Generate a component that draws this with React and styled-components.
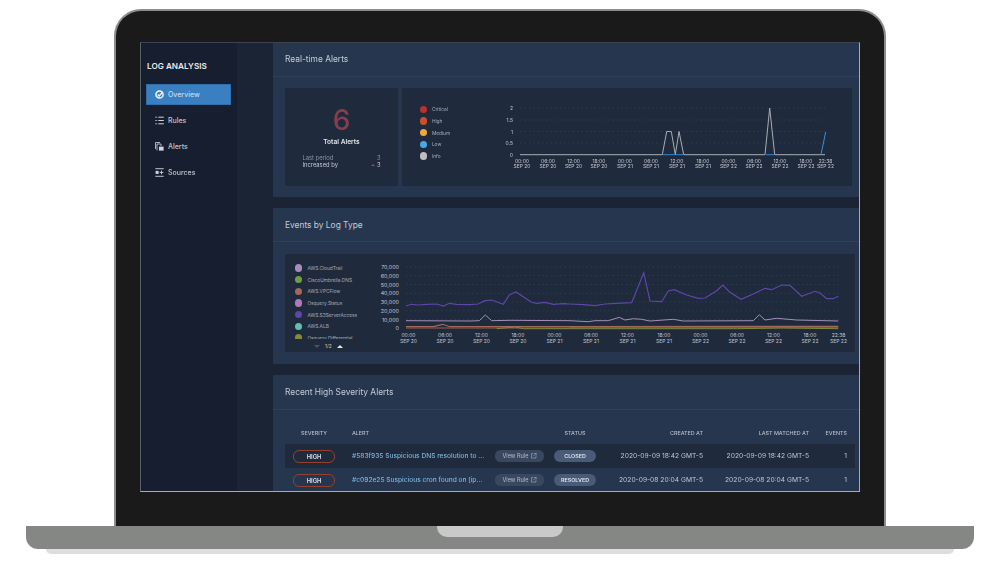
import React from "react";
import styled, { createGlobalStyle } from "styled-components";

const Global = createGlobalStyle`
  html, body { margin: 0; padding: 0; background: #fff; }
  body { width: 1000px; height: 562px; overflow: hidden; font-family: "Inter", "Liberation Sans", sans-serif; }
`;

const Page = styled.div`
  width: 1000px; height: 562px; padding-top: 9px; box-sizing: border-box;
  display: flex; flex-direction: column; align-items: center;
`;
const Lid = styled.div`
  width: 772px; height: 517px; box-sizing: border-box;
  background: #1a1a1a; border: 2px solid #8d8d8d; border-bottom: 0;
  border-radius: 27px 27px 0 0; padding: 31px 24px 0;
`;
const Screen = styled.div`
  width: 720px; height: 450px; box-sizing: border-box; display: flex; overflow: hidden;
  background: #1a2435;
  border: 1px solid #a9abae; border-top-color: #3c4350; border-left-color: #5a6068;
`;
const Soft = styled.div`
  display: flex; flex: 1; min-width: 0; filter: blur(0.4px);
`;
const Base = styled.div`
  width: 948px; height: 23px; background: #858785; border-radius: 0 0 12px 12px;
  display: flex; justify-content: center;
`;
const Notch = styled.div`
  width: 126px; height: 11px; background: #c9c9c9; border-radius: 0 0 10px 10px;
`;
const Shadow = styled.div`
  width: 908px; height: 5px; background: #dedede; border-radius: 0 0 6px 6px;
`;

const Sidebar = styled.aside`
  width: 96px; flex: none; background: #161e2f; padding: 16.5px 6px 0 5px; box-sizing: border-box;
`;
const Brand = styled.div`
  color: #e6e8ec; font-size: 8.2px; font-weight: 600; line-height: 12px; margin-left: 1px;
`;
const Nav = styled.nav`
  display: flex; flex-direction: column; gap: 4.4px; margin-top: 12px;
`;
const NavItem = styled.div`
  height: 21.6px; display: flex; align-items: center; box-sizing: border-box;
  padding-left: 8px; gap: 4px;
  background: ${p => (p.$active ? "#3a7fc1" : "transparent")};
  border: ${p => (p.$active ? "1px solid #2f6ea8" : "1px solid transparent")};
  color: ${p => (p.$active ? "#c9dcee" : "#c0c5ce")};
  font-size: 7px; font-weight: 500;
`;
const Rail = styled.div`
  width: 36px; flex: none; background: #1a2435;
`;
const Main = styled.main`
  flex: 1; min-width: 0; display: flex; flex-direction: column; gap: 10.5px;
`;
const Panel = styled.section`
  background: #26364f; flex: none; height: ${p => p.$h}px; overflow: ${p => p.$clip ? "hidden" : "visible"};
`;
const PanelHead = styled.h2`
  margin: 0; height: ${p => p.$h}px; box-sizing: border-box; padding: ${p => p.$nudge || 0}px 0 0 12px;
  display: flex; align-items: center;
  border-bottom: 1px solid #2f4059;
  color: #c5ccd6; font-size: 8.4px; font-weight: 400;
`;
const Row1 = styled.div`
  display: flex; gap: 4px; padding: 11px 7px 0 12px;
`;
const Card = styled.div`
  background: #1f2a3c; height: 98px; box-sizing: border-box;
`;
const TotalCard = styled(Card)`
  width: 113px; flex: none; display: flex; flex-direction: column; align-items: center; padding-top: 14px;
`;
const Big = styled.div`
  color: #843e4d; font-size: 28px; line-height: 36px; font-weight: 500;
`;
const TotalLabel = styled.div`
  color: #e2e5ea; font-size: 6.6px; font-weight: 600; line-height: 9px;
`;
const Stats = styled.div`
  width: 78px; margin-top: 7.3px; display: flex; flex-direction: column;
`;
const Stat = styled.div`
  display: flex; justify-content: space-between; align-items: center; font-size: 5.8px; line-height: 7.4px;
  color: ${p => (p.$dim ? "#8d95a3" : "#c5cad2")};
`;
const Delta = styled.span`
  display: flex; align-items: center; gap: 2px;
`;
const Up = styled.i`
  width: 0; height: 0; border: 2px solid transparent; border-top: 0; border-bottom: 2.4px solid #c03a3a;
`;
const ChartCard = styled(Card)`
  flex: 1; min-width: 0; display: flex;
`;
const Legend = styled.div`
  width: ${p => p.$w}px; flex: none; box-sizing: border-box; padding: ${p => p.$pt}px 0 0 ${p => p.$pl}px;
`;
const LegendList = styled.div`
  display: flex; flex-direction: column; ${p => p.$max ? `max-height:${p.$max}px; overflow:hidden;` : ""}
`;
const LegendRow = styled.div`
  height: 11.7px; flex: none; display: flex; align-items: center; gap: 5px;
  color: #a6adb8; font-size: 4.8px;
`;
const Dot = styled.i`
  width: 7.4px; height: 7.4px; border-radius: 50%; flex: none; background: ${p => p.$c};
`;
const Pager = styled.div`
  display: flex; align-items: center; gap: 5px; margin: 4.5px 0 0 19px; color: #c6cbd3; font-size: 4.8px; line-height: 7px;
`;
const Tri = styled.i`
  width: 0; height: 0; border-left: 3px solid transparent; border-right: 3px solid transparent;
  ${p => p.$up ? "border-bottom: 3px solid #e8e8e8;" : "border-top: 3px solid #46536a;"}
`;
const Plot = styled.svg`
  display: block; flex: none; overflow: visible;
`;
const Row2 = styled.div`
  padding: 12px 4px 0 12px;
`;
const WideCard = styled(Card)`
  display: flex;
`;
const Table = styled.div`
  margin: 11.5px 4px 0 12px;
`;
const TR = styled.div`
  display: grid; grid-template-columns: 58px 152px 59px 42px 107px 106px 38px 9px;
  height: ${p => p.$head ? 23 : 24}px; align-items: center; background: ${p => (p.$dark ? "#1f2a3c" : "transparent")};
`;
const TH = styled.div`
  color: #b7bdc7; font-size: 5.4px; font-weight: 500; white-space: nowrap;
  text-align: ${p => p.$a || "left"}; ${p => p.$pl ? `padding-left:${p.$pl}px;` : ""}
`;
const Sev = styled.span`
  justify-self: center; width: 42px; height: 13px; box-sizing: border-box;
  border: 1px solid #93412f; border-radius: 6px; color: #dfe2e7;
  display: flex; align-items: center; justify-content: center; font-size: 5.8px; font-weight: 600;
`;
const AlertLink = styled.div`
  color: #7db3de; font-size: 6.6px; font-weight: 500; padding-left: 9px; white-space: nowrap;
`;
const ViewRule = styled.span`
  width: 49px; height: 11.5px; border-radius: 5.5px; background: #39485f; color: #b4bbc6; box-sizing: border-box;
  display: flex; align-items: center; justify-content: center; gap: 2.5px; font-size: 5.6px;
`;
const Status = styled.span`
  width: 42px; height: 11.5px; border-radius: 6px; background: #4a5b78; color: #dfe3e9;
  display: flex; align-items: center; justify-content: center; font-size: 5.4px; font-weight: 600;
`;
const TD = styled.div`
  color: #c1c7d0; font-size: 6.7px; text-align: right; white-space: nowrap;
`;

const z4 = a => a.map(([x, y]) => `${(270 + x / 3).toFixed(1)},${(200 + y / 3).toFixed(1)}`).join(" ");
const z5 = a => a.map(([x, y]) => `${(570 + x / 3).toFixed(1)},${(200 + y / 3).toFixed(1)}`).join(" ");

const purple = z4([[408,318],[425,313],[445,315],[470,313],[500,312],[520,318],[538,310],[560,313],[600,314],[625,312],[645,302],[665,300],[700,313],[718,285],[738,276],[760,290],[785,307],[800,310],[825,307],[850,313],[880,311],[900,312]]) + " " +
  z5([[40,314],[75,317],[105,312],[140,310],[185,308],[221,218],[240,303],[275,305],[295,273],[313,269],[350,285],[385,295],[405,294],[440,272],[458,255],[478,275],[513,298],[550,282],[585,265],[605,269],[635,255],[660,256],[695,289],[735,274],[750,279],[770,296],[790,296],[805,289]]);
const lilac = z4([[408,362],[600,363],[628,362],[646,345],[665,362],[720,361],[900,362]]) + " " +
  z5([[55,365],[75,362],[115,362],[148,352],[165,360],[190,356],[215,358],[240,363],[310,358],[340,363],[550,362],[568,344],[585,360],[620,355],[680,360],[805,363]]);
const brown = z4([[408,380],[490,380],[518,373],[540,380],[900,380]]) + " " + z5([[0,380],[805,379]]);
const orange = z4([[408,384],[900,384]]) + " " + z5([[0,383],[805,383]]);
const green = z4([[680,386],[735,381],[760,386],[900,386]]) + " " + z5([[0,386],[500,386],[640,384],[805,386]]);

const ticks1 = [[522,"00:00","SEP 20"],[548,"06:00","SEP 20"],[573.6,"12:00","SEP 20"],[599,"18:00","SEP 20"],[625,"00:00","SEP 21"],[651,"06:00","SEP 21"],[677,"12:00","SEP 21"],[703,"18:00","SEP 21"],[728.5,"00:00","SEP 22"],[754,"06:00","SEP 22"],[780,"12:00","SEP 22"],[806,"18:00","SEP 22"],[825.5,"22:38","SEP 22"]];
const ticks2 = [[408.5,"00:00","SEP 20"],[445,"06:00","SEP 20"],[481.5,"12:00","SEP 20"],[518,"18:00","SEP 20"],[554.5,"00:00","SEP 21"],[591,"06:00","SEP 21"],[627.5,"12:00","SEP 21"],[664,"18:00","SEP 21"],[700.5,"00:00","SEP 22"],[737,"06:00","SEP 22"],[773.5,"12:00","SEP 22"],[810,"18:00","SEP 22"],[838.5,"22:38","SEP 22"]];

const Axis = ({ ys, x0, x1, ticks, labelX, y1, y2, fs, ylFs, fill }) => (
  <g fontFamily="Inter, sans-serif">
    {ys.map(([y, t]) => (
      <g key={t}>
        {t !== "0" && <line x1={x0} x2={x1} y1={y} y2={y} stroke="#3a4759" strokeWidth="0.7" strokeDasharray="1.4 3" />}
        <text x={labelX} y={y + 2} textAnchor="end" fontSize={ylFs} fill={fill}>{t}</text>
      </g>
    ))}
    {ticks.map(([x, a, b], i) => (
      <g key={i} textAnchor="middle" fontSize={fs} fill={fill}>
        <text x={x} y={y1}>{a}</text>
        <text x={x} y={y2}>{b}</text>
      </g>
    ))}
  </g>
);

const CheckIcon = () => (
  <svg width="9" height="9" viewBox="0 0 10 10">
    <circle cx="5" cy="5" r="4" fill="none" stroke="#eef3f8" strokeWidth="1.7" />
    <path d="M3 5l1.6 1.6L8.6 2.2" fill="none" stroke="#eef3f8" strokeWidth="1.5" />
  </svg>
);
const RulesIcon = () => (
  <svg width="9" height="9" viewBox="0 0 9 9" fill="none" stroke="#d2d6dc" strokeWidth="1">
    <path d="M3.4 1.2h5.4M3.4 4.5h5.4M3.4 7.8h5.4" />
    <path d="M0.4 1.2h1.8M0.4 4.5h1.8M0.4 7.8h1.8" strokeDasharray="0.8 0.2" />
  </svg>
);
const AlertsIcon = () => (
  <svg width="9" height="9" viewBox="0 0 9 9" fill="none" stroke="#d2d6dc" strokeWidth="0.8">
    <path d="M.5 7V.5h4.5" /><path d="M2 8.4V2h4v2" />
    <rect x="4" y="4.6" width="4.6" height="4" fill="#d2d6dc" stroke="none" />
  </svg>
);
const SourcesIcon = () => (
  <svg width="9" height="9" viewBox="0 0 9 9" fill="none" stroke="#d2d6dc" strokeWidth="0.9">
    <path d="M.3.7h8.4M.3 8.3h8.4" />
    <rect x=".6" y="2.9" width="3" height="3" fill="#d2d6dc" stroke="none" />
    <path d="M4.6 4.4h3.8M6.5 2.6v3.6" />
  </svg>
);
const ExtIcon = () => (
  <svg width="5.5" height="5.5" viewBox="0 0 6 6" fill="none" stroke="#b4bbc6" strokeWidth="0.6">
    <path d="M2.5.6H.5v4.9h4.9v-2M3.2.4h2.4v2.4M5.5.5L2.6 3.4" />
  </svg>
);

const legend1 = [["Critical","#b8322c"],["High","#c8512a"],["Medium","#f2a73b"],["Low","#4ca3ee"],["Info","#bdbdbd"]];
const legend2 = [["AWS.CloudTrail","#a98bbd"],["CiscoUmbrella.DNS","#6f9e4a"],["AWS.VPCFlow","#a2685c"],["Osquery.Status","#b07ab4"],["AWS.S3ServerAccess","#5c46a6"],["AWS.ALB","#62bfb2"],["Osquery.Differential","#848a38"]];

const rows = [
  { dark: true, text: "#583f935 Suspicious DNS resolution to ...", status: "CLOSED", a: "2020-09-09 18:42 GMT-5", b: "2020-09-09 18:42 GMT-5" },
  { dark: false, text: "#c092e25 Suspicious cron found on [ip...", status: "RESOLVED", a: "2020-09-08 20:04 GMT-5", b: "2020-09-08 20:04 GMT-5" },
];

export default function App() {
  return (
    <Page>
      <Global />
      <Lid>
        <Screen>
          <Soft>
            <Sidebar>
              <Brand>LOG ANALYSIS</Brand>
              <Nav>
                <NavItem $active><CheckIcon />Overview</NavItem>
                <NavItem><RulesIcon />Rules</NavItem>
                <NavItem><AlertsIcon />Alerts</NavItem>
                <NavItem><SourcesIcon />Sources</NavItem>
              </Nav>
            </Sidebar>
            <Rail />
            <Main>
              <Panel $h={154}>
                <PanelHead $h={33.5}>Real-time Alerts</PanelHead>
                <Row1>
                  <TotalCard>
                    <Big>6</Big>
                    <TotalLabel>Total Alerts</TotalLabel>
                    <Stats>
                      <Stat $dim><span>Last period</span><span>3</span></Stat>
                      <Stat><span>Increased by</span><Delta><Up />3</Delta></Stat>
                    </Stats>
                  </TotalCard>
                  <ChartCard>
                    <Legend $w={88} $pt={16} $pl={17.5}>
                      <LegendList>
                        {legend1.map(([t, c]) => <LegendRow key={t}><Dot $c={c} />{t}</LegendRow>)}
                      </LegendList>
                    </Legend>
                    <Plot width="362" height="98" viewBox="490 88 362 98">
                      <Axis ys={[[108,"2"],[120,"1.5"],[131.5,"1"],[143,"0.5"],[154.5,"0"]]} x0={520} x1={825} ticks={ticks1} labelX={513} y1={162.5} y2={167.5} fs={5} ylFs={5} fill="#c2c7cf" />
                      <polyline fill="none" stroke="#a9adb2" strokeWidth="1" points="520,154.7 662.3,154.7 666.7,131.5 671.3,131.5 675.3,154.7 679,131.5 683.7,154.7 765,154.7 769.7,108 774.7,154.7 825,154.7" />
                      <path d="M663 154.7h12M676 154.7h7M766 154.7h8" stroke="#2f86d6" strokeWidth="1" />
                      <path d="M821 154.5L825.7 132" stroke="#3b8fdc" strokeWidth="1" fill="none" />
                    </Plot>
                  </ChartCard>
                </Row1>
              </Panel>
              <Panel $h={156.5}>
                <PanelHead $h={34.5} $nudge={1}>Events by Log Type</PanelHead>
                <Row2>
                  <WideCard>
                    <Legend $w={88} $pt={8} $pl={10}>
                      <LegendList $max={76.5}>
                        {legend2.map(([t, c]) => <LegendRow key={t}><Dot $c={c} />{t}</LegendRow>)}
                      </LegendList>
                      <Pager><Tri />1/2<Tri $up /></Pager>
                    </Legend>
                    <Plot width="483" height="98" viewBox="373 254 483 98">
                      <Axis ys={[[267,"70,000"],[275.7,"60,000"],[284.5,"50,000"],[293.3,"40,000"],[302,"30,000"],[310.8,"20,000"],[319.6,"10,000"],[328.4,"0"]]} x0={406} x1={839} ticks={ticks2} labelX={399} y1={337} y2={342.5} fs={5} ylFs={5.4} fill="#c2c7cf" />
                      <polyline fill="none" stroke="#a2685c" strokeWidth="1.2" points={brown} />
                      <polyline fill="none" stroke="#9a5f45" strokeWidth="1" points={orange} />
                      <polyline fill="none" stroke="#7d8a3c" strokeWidth="1" points={green} />
                      <polyline fill="none" stroke="#5e47a8" strokeWidth="1.2" points={purple} />
                      <polyline fill="none" stroke="#a48fb8" strokeWidth="1" points={lilac} />
                    </Plot>
                  </WideCard>
                </Row2>
              </Panel>
              <Panel $h={118} $clip>
                <PanelHead $h={35}>Recent High Severity Alerts</PanelHead>
                <Table>
                  <TR $head>
                    <TH $a="center">SEVERITY</TH>
                    <TH $pl={9}>ALERT</TH>
                    <div />
                    <TH $a="center">STATUS</TH>
                    <TH $a="right">CREATED AT</TH>
                    <TH $a="right">LAST MATCHED AT</TH>
                    <TH $a="right">EVENTS</TH>
                  </TR>
                  {rows.map(r => (
                    <TR key={r.text} $dark={r.dark}>
                      <Sev>HIGH</Sev>
                      <AlertLink>{r.text}</AlertLink>
                      <ViewRule>View Rule <ExtIcon /></ViewRule>
                      <Status>{r.status}</Status>
                      <TD>{r.a}</TD>
                      <TD>{r.b}</TD>
                      <TD>1</TD>
                    </TR>
                  ))}
                </Table>
              </Panel>
            </Main>
          </Soft>
        </Screen>
      </Lid>
      <Base><Notch /></Base>
      <Shadow />
    </Page>
  );
}
